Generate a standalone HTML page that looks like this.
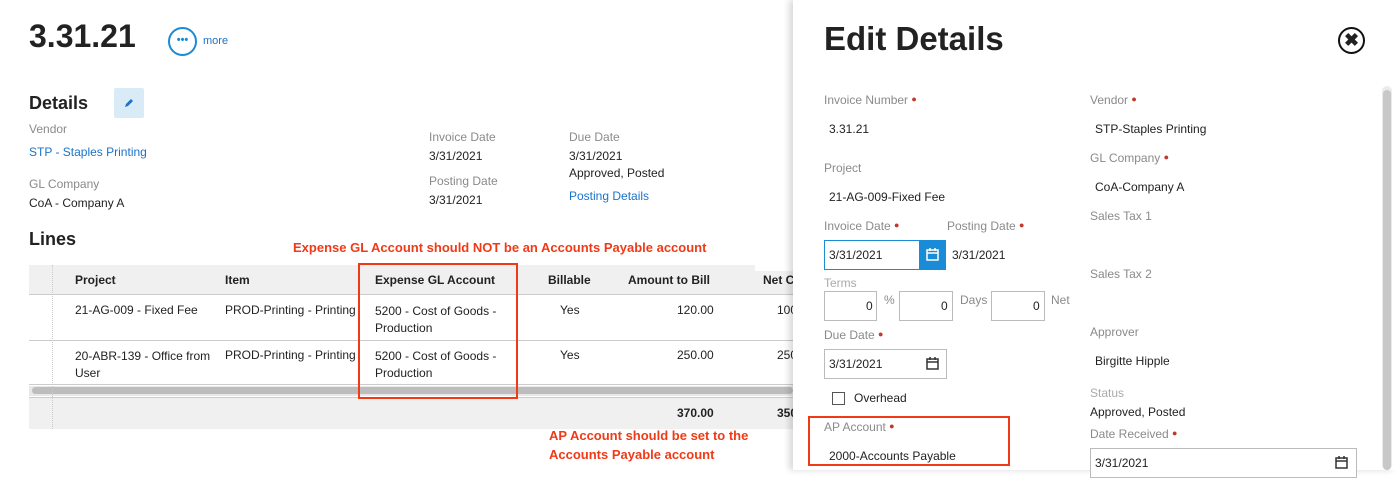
<!DOCTYPE html>
<html><head><meta charset="utf-8"><style>
*{margin:0;padding:0;box-sizing:border-box}
body{width:1396px;height:470px;overflow:hidden;background:#fff;font-family:"Liberation Sans",sans-serif;font-size:12px;color:#222;position:relative}
.a{position:absolute;white-space:nowrap}
.g{color:#8a8a8a}
.b{color:#1a73c9}
.r{color:#f03a17;font-weight:bold;font-size:13px}
.dot{color:#c0392b;font-size:9px;vertical-align:2px}
.hd{font-weight:bold}
.inp{position:absolute;border:1px solid #bbb;background:#fff}
</style></head><body>
<div class="a" style="left:29px;top:18px;font-size:32px;font-weight:bold;color:#222">3.31.21</div>
<div class="a" style="left:168px;top:27px;width:29px;height:29px;border:2px solid #1a8bd6;border-radius:50%;color:#1a8bd6;font-size:11px;font-weight:bold;text-align:center;line-height:22px">•••</div>
<div class="a b" style="left:203px;top:35px;font-size:11px">more</div>
<div class="a" style="left:29px;top:93px;font-size:18px;font-weight:bold">Details</div>
<div class="a" style="left:114px;top:88px;width:30px;height:30px;background:#d9ebf7;border-radius:2px"></div>
<svg class="a" style="left:122px;top:96px" width="14" height="14"><path d="M3 11 L4 8 L9 3 L11 5 L6 10 Z" fill="#1a73c9"/></svg>
<div class="a g" style="left:29px;top:122px">Vendor</div>
<div class="a b" style="left:29px;top:145px">STP - Staples Printing</div>
<div class="a g" style="left:29px;top:177px">GL Company</div>
<div class="a" style="left:29px;top:196px">CoA - Company A</div>
<div class="a g" style="left:429px;top:130px">Invoice Date</div>
<div class="a" style="left:429px;top:149px">3/31/2021</div>
<div class="a g" style="left:429px;top:174px">Posting Date</div>
<div class="a" style="left:429px;top:193px">3/31/2021</div>
<div class="a g" style="left:569px;top:130px">Due Date</div>
<div class="a" style="left:569px;top:149px">3/31/2021</div>
<div class="a" style="left:569px;top:166px">Approved, Posted</div>
<div class="a b" style="left:569px;top:189px">Posting Details</div>
<div class="a" style="left:29px;top:229px;font-size:18px;font-weight:bold">Lines</div>
<div class="a r" style="left:293px;top:240px">Expense GL Account should NOT be an Accounts Payable account</div>
<div class="a" style="left:29px;top:265px;width:764px;height:30px;background:#f0f0f0;border-bottom:1px solid #ccc"></div>
<div class="a" style="left:755px;top:265px;width:38px;height:6px;background:#fff"></div>
<div class="a" style="left:29px;top:340px;width:764px;height:1px;background:#ccc"></div>
<div class="a" style="left:29px;top:384px;width:764px;height:1px;background:#ccc"></div>
<div class="a" style="left:29px;top:386px;width:764px;height:10px;background:#e8e8e8"></div>
<div class="a" style="left:32px;top:387px;width:761px;height:7px;background:#bdbdbd;border-radius:4px"></div>
<div class="a" style="left:29px;top:397px;width:764px;height:1px;background:#ccc"></div>
<div class="a" style="left:29px;top:398px;width:764px;height:31px;background:#f0f0f0"></div>
<div class="a" style="left:52px;top:265px;width:0;height:164px;border-left:1px dotted #ccc"></div>
<div class="a hd" style="left:75px;top:273px">Project</div>
<div class="a hd" style="left:225px;top:273px">Item</div>
<div class="a hd" style="left:375px;top:273px">Expense GL Account</div>
<div class="a hd" style="left:548px;top:273px">Billable</div>
<div class="a hd" style="left:628px;top:273px">Amount to Bill</div>
<div class="a hd" style="left:763px;top:273px">Net C</div>
<div class="a" style="left:75px;top:303px">21-AG-009 - Fixed Fee</div>
<div class="a" style="left:225px;top:303px">PROD-Printing - Printing</div>
<div class="a" style="left:375px;top:303px;line-height:17px">5200 - Cost of Goods -<br>Production</div>
<div class="a" style="left:560px;top:303px">Yes</div>
<div class="a" style="left:677px;top:303px">120.00</div>
<div class="a" style="left:777px;top:303px">100</div>
<div class="a" style="left:75px;top:348px;line-height:17px">20-ABR-139 - Office from<br>User</div>
<div class="a" style="left:225px;top:348px">PROD-Printing - Printing</div>
<div class="a" style="left:375px;top:348px;line-height:17px">5200 - Cost of Goods -<br>Production</div>
<div class="a" style="left:560px;top:348px">Yes</div>
<div class="a" style="left:677px;top:348px">250.00</div>
<div class="a" style="left:777px;top:348px">250</div>
<div class="a hd" style="left:677px;top:406px">370.00</div>
<div class="a hd" style="left:777px;top:406px">350</div>
<div class="a" style="left:358px;top:263px;width:160px;height:136px;border:2px solid #f03a17"></div>
<div class="a r" style="left:549px;top:426px;line-height:19px">AP Account should be set to the<br>Accounts Payable account</div>

<div class="a" style="left:793px;top:0;width:603px;height:470px;background:#fff;box-shadow:-4px 0 6px rgba(0,0,0,.15)"></div>
<div class="a" style="left:824px;top:20px;font-size:33px;font-weight:bold;color:#222">Edit Details</div>
<div class="a" style="left:1338px;top:27px;width:27px;height:27px;border:2px solid #111;border-radius:50%;text-align:center;font-size:18px;font-weight:bold;line-height:22px">✖</div>
<div class="a" style="left:1382px;top:86px;width:10px;height:384px;background:#ebebeb;border-radius:5px"></div>
<div class="a" style="left:1383px;top:90px;width:8px;height:380px;background:#c8c8c8;border-radius:4px"></div>
<div class="a g" style="left:824px;top:93px">Invoice Number <span class="dot">●</span></div>
<div class="a" style="left:829px;top:122px">3.31.21</div>
<div class="a g" style="left:824px;top:161px">Project</div>
<div class="a" style="left:829px;top:190px">21-AG-009-Fixed Fee</div>
<div class="a g" style="left:824px;top:219px">Invoice Date <span class="dot">●</span></div>
<div class="a g" style="left:947px;top:219px">Posting Date <span class="dot">●</span></div>
<div class="inp" style="left:824px;top:240px;width:96px;height:30px;border:1px solid #1a8bd6"></div>
<div class="a" style="left:919px;top:240px;width:27px;height:30px;background:#1a8bd6"></div>
<svg class="a" style="left:925px;top:247px" width="15" height="15"><rect x="2" y="3" width="11" height="10" fill="none" stroke="#fff" stroke-width="1.5"/><path d="M2 6H13M5 1V4M10 1V4" stroke="#fff" stroke-width="1.5"/></svg>
<div class="a" style="left:829px;top:248px">3/31/2021</div>
<div class="a" style="left:952px;top:248px">3/31/2021</div>
<div class="a g" style="left:824px;top:276px;color:#aaa">Terms</div>
<div class="inp" style="left:824px;top:291px;width:53px;height:30px"></div>
<div class="a" style="left:866px;top:299px">0</div>
<div class="a g" style="left:884px;top:293px">%</div>
<div class="inp" style="left:899px;top:291px;width:54px;height:30px"></div>
<div class="a" style="left:941px;top:299px">0</div>
<div class="a g" style="left:960px;top:293px">Days</div>
<div class="inp" style="left:991px;top:291px;width:54px;height:30px"></div>
<div class="a" style="left:1033px;top:299px">0</div>
<div class="a g" style="left:1051px;top:293px">Net</div>
<div class="a g" style="left:824px;top:328px">Due Date <span class="dot">●</span></div>
<div class="inp" style="left:824px;top:349px;width:123px;height:30px"></div>
<div class="a" style="left:829px;top:357px">3/31/2021</div>
<svg class="a" style="left:925px;top:356px" width="15" height="15"><rect x="2" y="3" width="11" height="10" fill="none" stroke="#333" stroke-width="1.5"/><path d="M2 6H13M5 1V4M10 1V4" stroke="#333" stroke-width="1.5"/></svg>
<div class="a" style="left:832px;top:392px;width:13px;height:13px;border:1px solid #555"></div>
<div class="a" style="left:854px;top:391px">Overhead</div>
<div class="a" style="left:808px;top:416px;width:202px;height:50px;border:2px solid #f03a17"></div>
<div class="a g" style="left:824px;top:420px">AP Account <span class="dot">●</span></div>
<div class="a" style="left:829px;top:449px">2000-Accounts Payable</div>
<div class="a g" style="left:1090px;top:93px">Vendor <span class="dot">●</span></div>
<div class="a" style="left:1095px;top:122px">STP-Staples Printing</div>
<div class="a g" style="left:1090px;top:151px">GL Company <span class="dot">●</span></div>
<div class="a" style="left:1095px;top:180px">CoA-Company A</div>
<div class="a g" style="left:1090px;top:209px">Sales Tax 1</div>
<div class="a g" style="left:1090px;top:267px">Sales Tax 2</div>
<div class="a g" style="left:1090px;top:325px">Approver</div>
<div class="a" style="left:1095px;top:354px">Birgitte Hipple</div>
<div class="a g" style="left:1090px;top:386px;color:#aaa">Status</div>
<div class="a" style="left:1090px;top:405px">Approved, Posted</div>
<div class="a g" style="left:1090px;top:427px">Date Received <span class="dot">●</span></div>
<div class="inp" style="left:1090px;top:448px;width:267px;height:30px"></div>
<div class="a" style="left:1095px;top:456px">3/31/2021</div>
<svg class="a" style="left:1334px;top:455px" width="15" height="15"><rect x="2" y="3" width="11" height="10" fill="none" stroke="#333" stroke-width="1.5"/><path d="M2 6H13M5 1V4M10 1V4" stroke="#333" stroke-width="1.5"/></svg>
</body></html>
